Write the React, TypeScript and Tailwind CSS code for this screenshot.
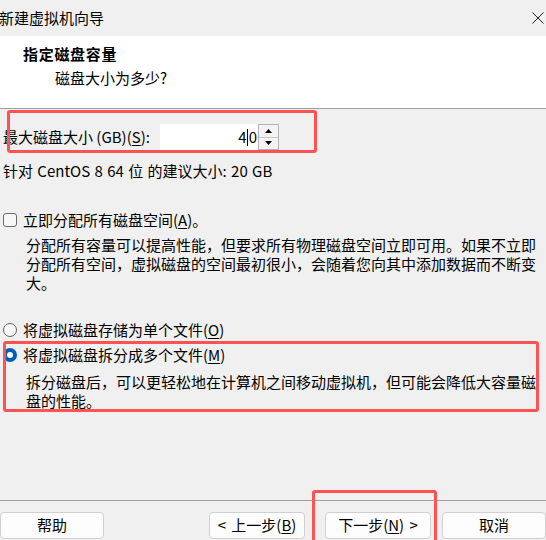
import React from 'react';

function Key({ k }: { k: string }) {
  return <span className="underline underline-offset-2">{k}</span>;
}

function Button({ children, className = '' }: { children: React.ReactNode; className?: string }) {
  return (
    <div
      className={`flex h-[27px] shrink-0 items-center justify-center rounded-[4px] border border-[#d0d0d0] bg-[#fdfdfd] text-[15px] ${className}`}
    >
      {children}
    </div>
  );
}

function Radio({ checked }: { checked?: boolean }) {
  if (checked) {
    return (
      <div className="flex h-[14px] w-[14px] items-center justify-center rounded-full bg-[#005fb8]">
        <div className="h-[6px] w-[6px] rounded-full bg-white" />
      </div>
    );
  }
  return <div className="h-[14px] w-[14px] rounded-full border border-[#5f5f5f] bg-[#f7f7f7]" />;
}

export default function App() {
  return (
    <div className="relative flex h-[540px] w-[546px] flex-col overflow-hidden bg-[#f0f0f0] font-['Noto_Sans_CJK_SC',sans-serif] text-black">
      {/* title bar */}
      <div className="flex h-[36px] shrink-0 items-center justify-between">
        <span className="-ml-px text-[15px]">新建虚拟机向导</span>
        <svg width="12" height="12" viewBox="0 0 12 12" className="mr-[2px]">
          <path d="M0.5 0.5 L11.5 11.5 M11.5 0.5 L0.5 11.5" stroke="#222" strokeWidth="1" />
        </svg>
      </div>

      {/* header */}
      <div className="h-[73px] shrink-0 border-b border-[#a0a0a0] bg-white">
        <div className="mt-[8px] pl-[23px] text-[15px] font-bold leading-[20px] tracking-[0.7px]">指定磁盘容量</div>
        <div className="mt-[4px] pl-[55px] text-[15px] leading-[20px]">磁盘大小为多少?</div>
      </div>

      {/* body */}
      <div className="flex flex-1 flex-col text-[15px]">
        <div className="mt-[15px] flex h-[26px] items-center">
          <span className="w-[160px] shrink-0 pl-[3px]">
            最大磁盘大小 (GB)(<Key k="S" />):
          </span>
          <div className="flex h-[26px] w-[98px] items-center justify-end bg-white pr-[1px]">
            <span>4</span>
            <span className="mx-[0.5px] h-[17px] w-px bg-black" />
            <span>0</span>
          </div>
          <div className="flex h-[26px] w-[21px] flex-col border border-[#b4b4b4] bg-[#f3f3f3]">
            <div className="flex flex-1 items-center justify-center border-b border-[#c8c8c8]">
              <svg width="7" height="4" viewBox="0 0 7 4">
                <path d="M3.5 0 L7 4 L0 4 Z" fill="#000" />
              </svg>
            </div>
            <div className="flex flex-1 items-center justify-center">
              <svg width="7" height="4" viewBox="0 0 7 4">
                <path d="M0 0 L7 0 L3.5 4 Z" fill="#000" />
              </svg>
            </div>
          </div>
        </div>

        <div className="mt-[11px] h-[20px] pl-[3px] leading-[20px] [word-spacing:1px]">针对 CentOS 8 64 位 的建议大小: 20 GB</div>

        <div className="mt-[29px] flex h-[20px] items-center">
          <div className="ml-[3px] h-[14px] w-[14px] rounded-[3px] border border-[#6a6a6a] bg-[#f7f7f7]" />
          <span className="ml-[6px]">
            立即分配所有磁盘空间(<Key k="A" />)。
          </span>
        </div>
        <div className="mt-[5px] pl-[26px] leading-[19px]">
          分配所有容量可以提高性能，但要求所有物理磁盘空间立即可用。如果不立即分配所有空间，虚拟磁盘的空间最初很小，会随着您向其中添加数据而不断变大。
        </div>

        <div className="mt-[28px] flex h-[20px] items-center">
          <div className="ml-[3px]">
            <Radio />
          </div>
          <span className="ml-[6px]">
            将虚拟磁盘存储为单个文件(<Key k="O" />)
          </span>
        </div>
        <div className="mt-[5px] flex h-[20px] items-center">
          <div className="ml-[3px]">
            <Radio checked />
          </div>
          <span className="ml-[6px]">
            将虚拟磁盘拆分成多个文件(<Key k="M" />)
          </span>
        </div>
        <div className="mt-[7px] w-[546px] pl-[26px] leading-[19px]">
          拆分磁盘后，可以更轻松地在计算机之间移动虚拟机，但可能会降低大容量磁盘的性能。
        </div>
      </div>

      {/* footer */}
      <div className="h-[40px] shrink-0 border-t border-[#a0a0a0] pt-[11px]">
        <div className="flex">
          <Button className="w-[104px]">帮助</Button>
          <div className="flex-1" />
          <Button className="w-[96px] [word-spacing:2px]">
            &lt; 上一步(<Key k="B" />)
          </Button>
          <Button className="ml-[20px] w-[106px] border-[#0067c0] [word-spacing:2px]">
            下一步(<Key k="N" />) &gt;
          </Button>
          <Button className="ml-[11px] w-[104px]">取消</Button>
        </div>
      </div>

      {/* annotation boxes */}
      <div className="absolute left-[7px] top-[110px] h-[43px] w-[310px] rounded-[3px] border-[3px] border-[#ff5252]" />
      <div className="absolute left-[3px] top-[341px] h-[71px] w-[536px] rounded-[3px] border-[3px] border-[#ff5252]" />
      <div className="absolute left-[312px] top-[490px] h-[60px] w-[125px] rounded-[3px] border-[3px] border-[#ff5252]" />
    </div>
  );
}
